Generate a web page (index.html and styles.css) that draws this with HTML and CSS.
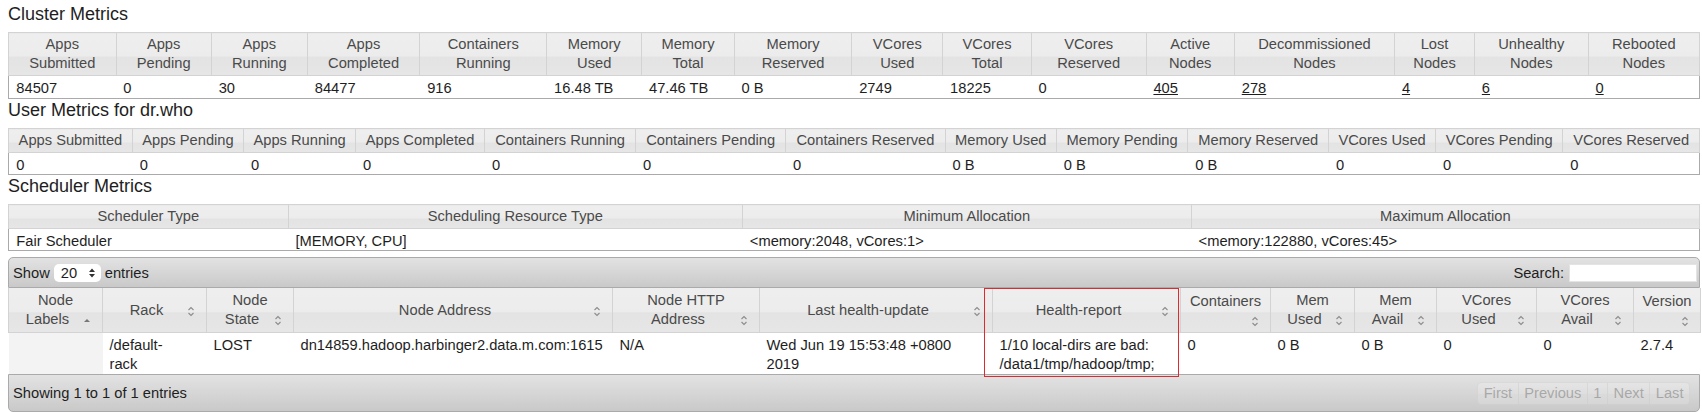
FILE: index.html
```html
<!DOCTYPE html>
<html>
<head>
<meta charset="utf-8">
<title>Nodes of the cluster</title>
<link rel="stylesheet" href="styles.css">
</head>
<body>
<div class="page">
  <h3 class="section-title">Cluster Metrics</h3>
  <table class="metrics metrics-cluster">
    <thead>
      <tr>
        <th>Apps Submitted</th><th>Apps Pending</th><th>Apps Running</th><th>Apps Completed</th><th>Containers Running</th><th>Memory Used</th><th>Memory Total</th><th>Memory Reserved</th><th>VCores Used</th><th>VCores Total</th><th>VCores Reserved</th><th>Active Nodes</th><th>Decommissioned Nodes</th><th>Lost Nodes</th><th>Unhealthy Nodes</th><th>Rebooted Nodes</th>
      </tr>
    </thead>
    <tbody>
      <tr>
        <td>84507</td><td>0</td><td>30</td><td>84477</td><td>916</td><td>16.48 TB</td><td>47.46 TB</td><td>0 B</td><td>2749</td><td>18225</td><td>0</td><td><a class="num-link" href="#">405</a></td><td><a class="num-link" href="#">278</a></td><td><a class="num-link" href="#">4</a></td><td><a class="num-link" href="#">6</a></td><td><a class="num-link" href="#">0</a></td>
      </tr>
    </tbody>
  </table>

  <h3 class="section-title">User Metrics for dr.who</h3>
  <table class="metrics">
    <thead>
      <tr>
        <th>Apps Submitted</th><th>Apps Pending</th><th>Apps Running</th><th>Apps Completed</th><th>Containers Running</th><th>Containers Pending</th><th>Containers Reserved</th><th>Memory Used</th><th>Memory Pending</th><th>Memory Reserved</th><th>VCores Used</th><th>VCores Pending</th><th>VCores Reserved</th>
      </tr>
    </thead>
    <tbody>
      <tr>
        <td>0</td><td>0</td><td>0</td><td>0</td><td>0</td><td>0</td><td>0</td><td>0 B</td><td>0 B</td><td>0 B</td><td>0</td><td>0</td><td>0</td>
      </tr>
    </tbody>
  </table>

  <h3 class="section-title">Scheduler Metrics</h3>
  <table class="metrics">
    <thead>
      <tr>
        <th>Scheduler Type</th><th>Scheduling Resource Type</th><th>Minimum Allocation</th><th>Maximum Allocation</th>
      </tr>
    </thead>
    <tbody>
      <tr>
        <td>Fair Scheduler</td><td>[MEMORY, CPU]</td><td>&lt;memory:2048, vCores:1&gt;</td><td>&lt;memory:122880, vCores:45&gt;</td>
      </tr>
    </tbody>
  </table>

  <div class="dt-wrapper">
    <div class="dt-toolbar dt-top">
      <div class="dt-length">
        <span>Show</span>
        <span class="fake-select">20<svg class="sel-arrows" width="8" height="12" viewBox="0 0 8 12"><path d="M1 5 4 1.5 7 5Z M1 7 4 10.5 7 7Z" fill="#333"/></svg></span>
        <span>entries</span>
      </div>
      <div class="dt-filter">
        <span>Search:</span>
        <span class="fake-input"></span>
      </div>
    </div>

    <table class="nodes">
      <colgroup>
        <col class="w-labels"><col class="w-rack"><col class="w-state"><col class="w-addr"><col class="w-http"><col class="w-last"><col class="w-report"><col class="w-cont"><col class="w-memu"><col class="w-mema"><col class="w-vcu"><col class="w-vca"><col class="w-ver">
      </colgroup>
      <thead>
        <tr>
          <th><div class="sort-wrap">Node<br>Labels<svg class="sort-icon" width="16" height="16" viewBox="0 0 16 16"><path d="M5 10 8 7 11 10Z" fill="#777"/></svg></div></th>
          <th><div class="sort-wrap">Rack<svg class="sort-icon" width="16" height="16" viewBox="0 0 16 16"><path d="M5.5 7 8 4.5 10.5 7M5.5 10 8 12.5 10.5 10" fill="none" stroke="#8c8c8c" stroke-width="1.1"/></svg></div></th>
          <th><div class="sort-wrap">Node<br>State<svg class="sort-icon" width="16" height="16" viewBox="0 0 16 16"><path d="M5.5 7 8 4.5 10.5 7M5.5 10 8 12.5 10.5 10" fill="none" stroke="#8c8c8c" stroke-width="1.1"/></svg></div></th>
          <th><div class="sort-wrap">Node Address<svg class="sort-icon" width="16" height="16" viewBox="0 0 16 16"><path d="M5.5 7 8 4.5 10.5 7M5.5 10 8 12.5 10.5 10" fill="none" stroke="#8c8c8c" stroke-width="1.1"/></svg></div></th>
          <th><div class="sort-wrap">Node HTTP<br>Address<svg class="sort-icon" width="16" height="16" viewBox="0 0 16 16"><path d="M5.5 7 8 4.5 10.5 7M5.5 10 8 12.5 10.5 10" fill="none" stroke="#8c8c8c" stroke-width="1.1"/></svg></div></th>
          <th><div class="sort-wrap">Last health-update<svg class="sort-icon" width="16" height="16" viewBox="0 0 16 16"><path d="M5.5 7 8 4.5 10.5 7M5.5 10 8 12.5 10.5 10" fill="none" stroke="#8c8c8c" stroke-width="1.1"/></svg></div></th>
          <th><div class="sort-wrap">Health-report<svg class="sort-icon" width="16" height="16" viewBox="0 0 16 16"><path d="M5.5 7 8 4.5 10.5 7M5.5 10 8 12.5 10.5 10" fill="none" stroke="#8c8c8c" stroke-width="1.1"/></svg></div></th>
          <th><div class="sort-wrap">Containers<svg class="sort-icon" width="16" height="16" viewBox="0 0 16 16"><path d="M5.5 7 8 4.5 10.5 7M5.5 10 8 12.5 10.5 10" fill="none" stroke="#8c8c8c" stroke-width="1.1"/></svg></div></th>
          <th><div class="sort-wrap">Mem<br>Used<svg class="sort-icon" width="16" height="16" viewBox="0 0 16 16"><path d="M5.5 7 8 4.5 10.5 7M5.5 10 8 12.5 10.5 10" fill="none" stroke="#8c8c8c" stroke-width="1.1"/></svg></div></th>
          <th><div class="sort-wrap">Mem<br>Avail<svg class="sort-icon" width="16" height="16" viewBox="0 0 16 16"><path d="M5.5 7 8 4.5 10.5 7M5.5 10 8 12.5 10.5 10" fill="none" stroke="#8c8c8c" stroke-width="1.1"/></svg></div></th>
          <th><div class="sort-wrap">VCores<br>Used<svg class="sort-icon" width="16" height="16" viewBox="0 0 16 16"><path d="M5.5 7 8 4.5 10.5 7M5.5 10 8 12.5 10.5 10" fill="none" stroke="#8c8c8c" stroke-width="1.1"/></svg></div></th>
          <th><div class="sort-wrap">VCores<br>Avail<svg class="sort-icon" width="16" height="16" viewBox="0 0 16 16"><path d="M5.5 7 8 4.5 10.5 7M5.5 10 8 12.5 10.5 10" fill="none" stroke="#8c8c8c" stroke-width="1.1"/></svg></div></th>
          <th><div class="sort-wrap">Version<svg class="sort-icon" width="16" height="16" viewBox="0 0 16 16"><path d="M5.5 7 8 4.5 10.5 7M5.5 10 8 12.5 10.5 10" fill="none" stroke="#8c8c8c" stroke-width="1.1"/></svg></div></th>
        </tr>
      </thead>
      <tbody>
        <tr>
          <td class="sorted"></td>
          <td>/default-<br>rack</td>
          <td>LOST</td>
          <td>dn14859.hadoop.harbinger2.data.m.com:1615</td>
          <td>N/A</td>
          <td>Wed Jun 19 15:53:48 +0800<br>2019</td>
          <td>1/10 local-dirs are bad: /data1/tmp/hadoop/tmp;</td>
          <td>0</td>
          <td>0 B</td>
          <td>0 B</td>
          <td>0</td>
          <td>0</td>
          <td>2.7.4</td>
        </tr>
      </tbody>
    </table>

    <div class="dt-toolbar dt-bottom">
      <div class="dt-info">Showing 1 to 1 of 1 entries</div>
      <div class="dt-paging">
        <span class="pg-btn pg-first">First</span><span class="pg-btn">Previous</span><span class="pg-btn">1</span><span class="pg-btn">Next</span><span class="pg-btn pg-last">Last</span>
      </div>
    </div>

    <div class="highlight-box"></div>
  </div>
</div>
</body>
</html>
```

FILE: styles.css
```css
* { box-sizing: border-box; }

html, body {
  margin: 0;
  padding: 0;
  background: #ffffff;
}

body {
  font-family: "Liberation Sans", Arial, Helvetica, sans-serif;
  font-size: 14.7px;
  color: #1e1e1e;
}

.page {
  padding: 3px 2px 0 8px;
}

.section-title {
  margin: 0 0 7px;
  font-size: 18px;
  line-height: 22px;
  font-weight: normal;
  color: #1e1e1e;
}

/* ---------- metrics tables ---------- */
.metrics {
  width: 100%;
  border-collapse: collapse;
  border: 1px solid #aaaaaa;
}

.metrics th {
  padding: 2px 7.35px;
  line-height: 19px;
  font-weight: normal;
  color: #4a4a4a;
  text-align: center;
  vertical-align: middle;
  border: 1px solid #d3d3d3;
  background: linear-gradient(to bottom, #eeeeee 0%, #ececec 55%, #e3e3e3 56%, #e6e6e6 100%);
}

.metrics td {
  padding: 3px 7.35px 0;
  line-height: 18px;
  text-align: left;
  vertical-align: top;
  color: #1e1e1e;
}

.metrics-cluster td {
  line-height: 19px;
}

.num-link {
  color: #1e1e1e;
  text-decoration: underline;
}

/* ---------- datatables wrapper ---------- */
.dt-wrapper {
  position: relative;
  margin-top: 6px;
}

.dt-toolbar {
  display: flex;
  align-items: center;
  justify-content: space-between;
  border: 1px solid #aaaaaa;
  background: linear-gradient(to bottom, #e2e2e2 0%, #d6d6d6 50%, #c9c9c9 100%);
  color: #1e1e1e;
}

.dt-top {
  height: 31px;
  padding: 0 2px 0 4px;
  border-radius: 5px 5px 0 0;
}

.dt-bottom {
  height: 38px;
  padding: 0 9px 0 4px;
  border-radius: 0 0 5px 5px;
}

.dt-length {
  display: flex;
  align-items: center;
  gap: 4px;
}

.fake-select {
  display: inline-flex;
  align-items: center;
  justify-content: space-between;
  width: 47px;
  height: 18px;
  padding: 0 5px 0 7px;
  background: #ffffff;
  border-radius: 5px;
  line-height: 18px;
}

.sel-arrows { display: block; }

.dt-filter {
  display: flex;
  align-items: center;
  gap: 5px;
}

.fake-input {
  display: block;
  width: 128px;
  height: 18px;
  background: #ffffff;
  border: 1px solid #e4e4e4;
}

/* ---------- nodes table ---------- */
.nodes {
  width: 100%;
  table-layout: fixed;
  border-collapse: collapse;
}

.w-labels { width: 94px; }
.w-rack { width: 104px; }
.w-state { width: 87px; }
.w-addr { width: 319px; }
.w-http { width: 147px; }
.w-last { width: 233px; }
.w-report { width: 188px; }
.w-cont { width: 90px; }
.w-memu { width: 84px; }
.w-mema { width: 82px; }
.w-vcu { width: 100px; }
.w-vca { width: 97px; }
.w-ver { width: 67px; }

.nodes th {
  padding: 3px 7px;
  line-height: 19px;
  font-weight: normal;
  color: #4a4a4a;
  text-align: center;
  vertical-align: middle;
  border: 1px solid #d3d3d3;
  border-top: none;
  background: linear-gradient(to bottom, #eeeeee 0%, #ececec 55%, #e3e3e3 56%, #e6e6e6 100%);
}

.sort-wrap {
  text-align: center;
}

.sort-icon {
  float: right;
  margin-top: 2px;
}

.nodes td {
  padding: 3px 7px 0;
  line-height: 19px;
  vertical-align: top;
  text-align: left;
  color: #1e1e1e;
  height: 41px;
}

.nodes td.sorted {
  background: #f3f3f3;
}

/* ---------- footer ---------- */
.dt-paging {
  display: flex;
  opacity: 0.35;
}

.pg-btn {
  display: block;
  padding: 1px 5.5px;
  line-height: 19px;
  color: #555555;
  border: 1px solid #d3d3d3;
  margin-right: -1px;
  background: linear-gradient(to bottom, #f4f4f4 0%, #efefef 50%, #e6e6e6 51%, #e6e6e6 100%);
}

.pg-first { border-radius: 4px 0 0 4px; }
.pg-last { border-radius: 0 4px 4px 0; margin-right: 0; }

.highlight-box {
  position: absolute;
  left: 976px;
  top: 31px;
  width: 195px;
  height: 89px;
  border: 1px solid #dc2a2f;
  pointer-events: none;
}
```
